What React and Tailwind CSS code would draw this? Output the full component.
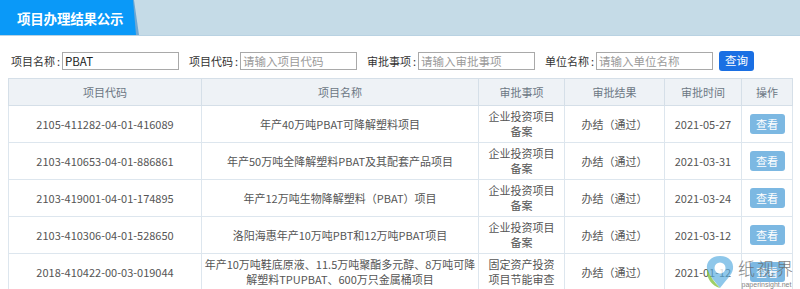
import React from "react";

const rows = [
  { code: "2105-411282-04-01-416089", name: ["年产40万吨PBAT可降解塑料项目"], item: ["企业投资项目", "备案"], date: "2021-05-27" },
  { code: "2103-410653-04-01-886861", name: ["年产50万吨全降解塑料PBAT及其配套产品项目"], item: ["企业投资项目", "备案"], date: "2021-03-31" },
  { code: "2103-419001-04-01-174895", name: ["年产12万吨生物降解塑料（PBAT）项目"], item: ["企业投资项目", "备案"], date: "2021-03-24" },
  { code: "2103-410306-04-01-528650", name: ["洛阳海惠年产10万吨PBT和12万吨PBAT项目"], item: ["企业投资项目", "备案"], date: "2021-03-12" },
  { code: "2018-410422-00-03-019044", name: ["年产10万吨鞋底原液、11.5万吨聚酯多元醇、8万吨可降", "解塑料TPUPBAT、600万只金属桶项目"], item: ["固定资产投资", "项目节能审查"], date: "2021-01-12" },
];

function Field({ label, value, placeholder, first }) {
  return (
    <div className={`flex items-center ${first ? "" : "ml-[10px]"}`}>
      <span className="w-[51px] flex items-center whitespace-nowrap text-[11px] text-[#333] leading-none">
        {label}
        <span className="ml-[2px]">:</span>
      </span>
      <input
        readOnly
        defaultValue={value}
        placeholder={placeholder}
        className="w-[117px] h-[18px] border border-[#a9a9a9] px-[2px] text-[11.5px] text-[#222] placeholder:text-[#9a9a9a] outline-none bg-white"
      />
    </div>
  );
}

export default function App() {
  return (
    <div
      className="relative w-[800px] h-[289px] overflow-hidden bg-white"
      style={{ fontFamily: '"Noto Sans CJK SC", "Noto Sans", sans-serif' }}
    >
      {/* header */}
      <div className="h-[36px] bg-[#c5dbe7] flex border-b border-[#b9d2e2]">
        <div className="relative w-[139px] h-full">
          <div className="absolute inset-0 bg-[#6fa8d3] [clip-path:polygon(0_0,134px_0,139px_100%,0_100%)]" />
          <div className="absolute inset-0 bg-[#0a99f8] [clip-path:polygon(0_0,133px_0,136px_100%,0_100%)] flex items-center pl-[17px] pt-[1px]">
            <span className="text-white font-bold text-[13.5px] tracking-[-0.2px] whitespace-nowrap">项目办理结果公示</span>
          </div>
        </div>
      </div>

      {/* search row */}
      <div className="flex items-center pl-[11px] pt-[15px] h-[20px] box-content">
        <Field label="项目名称" value="PBAT" first />
        <Field label="项目代码" placeholder="请输入项目代码" />
        <Field label="审批事项" placeholder="请输入审批事项" />
        <Field label="单位名称" placeholder="请输入单位名称" />
        <button className="ml-[6px] w-[35px] h-[20px] rounded-[3px] bg-[#1a6fe3] text-white text-[11.5px] leading-none">
          查询
        </button>
      </div>

      {/* table */}
      <div className="px-[8px] mt-[7px]">
        <table className="w-[784px] table-fixed border-collapse border border-[#d5dfe8] text-[11px] text-[#555]">
          <colgroup>
            <col className="w-[193px]" />
            <col className="w-[277px]" />
            <col className="w-[86px]" />
            <col className="w-[100px]" />
            <col className="w-[77px]" />
            <col className="w-[51px]" />
          </colgroup>
          <thead>
            <tr className="h-[27px] bg-[#eef2f6] text-[#6c7784]">
              {["项目代码", "项目名称", "审批事项", "审批结果", "审批时间", "操作"].map((h) => (
                <th key={h} className="font-normal border border-[#d5dfe8] text-center p-0">
                  {h}
                </th>
              ))}
            </tr>
          </thead>
          <tbody>
            {rows.map((r) => (
              <tr key={r.code} className="h-[37px]">
                <td className="border border-[#dde6ee] text-center p-0">{r.code}</td>
                <td className="border border-[#dde6ee] text-center p-0 leading-[15px]">
                  {r.name.map((l, i) => (
                    <div key={i}>{l}</div>
                  ))}
                </td>
                <td className="border border-[#dde6ee] text-center p-0 leading-[15px]">
                  {r.item.map((l, i) => (
                    <div key={i}>{l}</div>
                  ))}
                </td>
                <td className="border border-[#dde6ee] text-center p-0">办结（通过）</td>
                <td className="border border-[#dde6ee] text-center p-0">{r.date}</td>
                <td className="border border-[#dde6ee] text-center p-0">
                  <button className="w-[35px] h-[20px] rounded-[3px] bg-[#7cb8e2] text-white text-[11px] leading-none">
                    查看
                  </button>
                </td>
              </tr>
            ))}
          </tbody>
        </table>
      </div>

      {/* watermark */}
      <div className="absolute left-[702px] top-[254px] w-[96px] flex items-start opacity-80 pointer-events-none">
        <svg width="36" height="36" viewBox="0 0 36 36" className="shrink-0">
          <path d="M18 2 C9 2 4 8 5 15 C6 21 12 26 18 34 C24 26 30 21 31 15 C32 8 27 2 18 2 Z" fill="#5aaee0" opacity="0.85" />
          <circle cx="18" cy="14" r="5.5" fill="#ffffff" />
          <path d="M5 15 C4 24 10 32 18 34 C12 28 8 22 5 15 Z" fill="#86c440" />
        </svg>
        <div className="flex flex-col items-center whitespace-nowrap">
          <span className="text-[17px] leading-[27px] text-[#666] tracking-[2px] font-light">纸视界</span>
          <span className="text-[7px] leading-[8px] text-[#666]" style={{ fontFamily: '"Liberation Sans", sans-serif' }}>
            paperinsight.net
          </span>
        </div>
      </div>
    </div>
  );
}
